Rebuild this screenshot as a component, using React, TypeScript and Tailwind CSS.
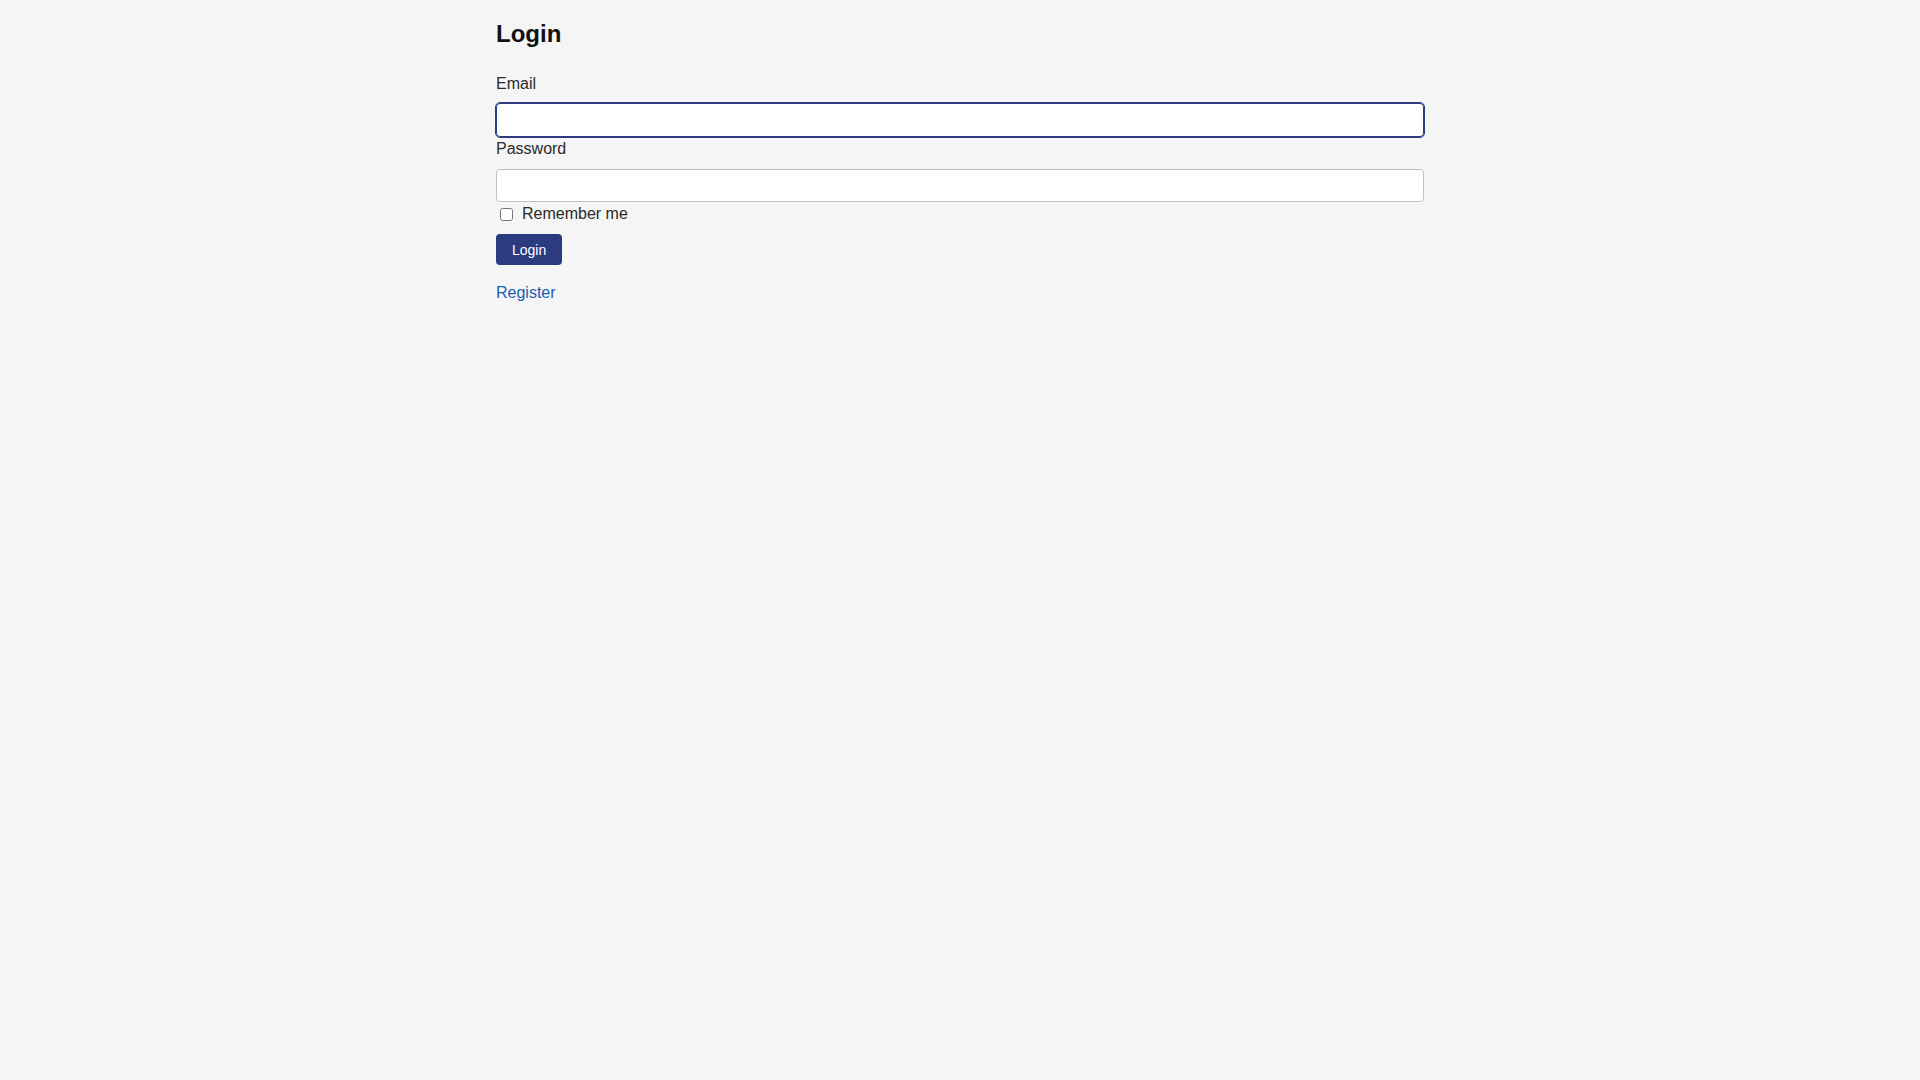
export default function App() {
  return (
    <div className="min-h-screen bg-[#f5f5f5] font-['Liberation_Sans',Arial,sans-serif] text-[#2a2a2a]">
      <div className="mx-auto w-[960px] px-4 pt-5">
        <h1 className="text-[24px] font-bold leading-[28px] text-[#111]">Login</h1>
        <form className="flex flex-col" onSubmit={(e) => e.preventDefault()}>
          <label htmlFor="email" className="mt-[26px] text-[16px] leading-[20px]">
            Email
          </label>
          <input
            id="email"
            type="email"
            className="mt-[9px] h-[34px] w-full rounded-[4px] border border-[#2c3a80] bg-white px-2 outline outline-1 outline-[#2c3a80]"
          />
          <label htmlFor="password" className="mt-[2px] text-[16px] leading-[20px]">
            Password
          </label>
          <input
            id="password"
            type="password"
            className="mt-[10px] h-[33px] w-full rounded-[4px] border border-[#c2c2c2] bg-white px-2 outline-none"
          />
          <label className="mt-[2px] flex h-5 items-center text-[16px] leading-[20px]">
            <input type="checkbox" className="m-0 ml-1 mr-[9px] h-[13px] w-[13px]" />
            Remember me
          </label>
          <div className="mt-[10px]">
            <button
              type="submit"
              className="h-[31px] rounded-[4px] bg-[#2c3a80] px-4 text-[14px] leading-[16px] text-white"
            >
              Login
            </button>
          </div>
        </form>
        <div className="mt-[18px] text-[16px] leading-[20px]">
          <a href="#" className="text-[#1c5db4]">
            Register
          </a>
        </div>
      </div>
    </div>
  );
}
